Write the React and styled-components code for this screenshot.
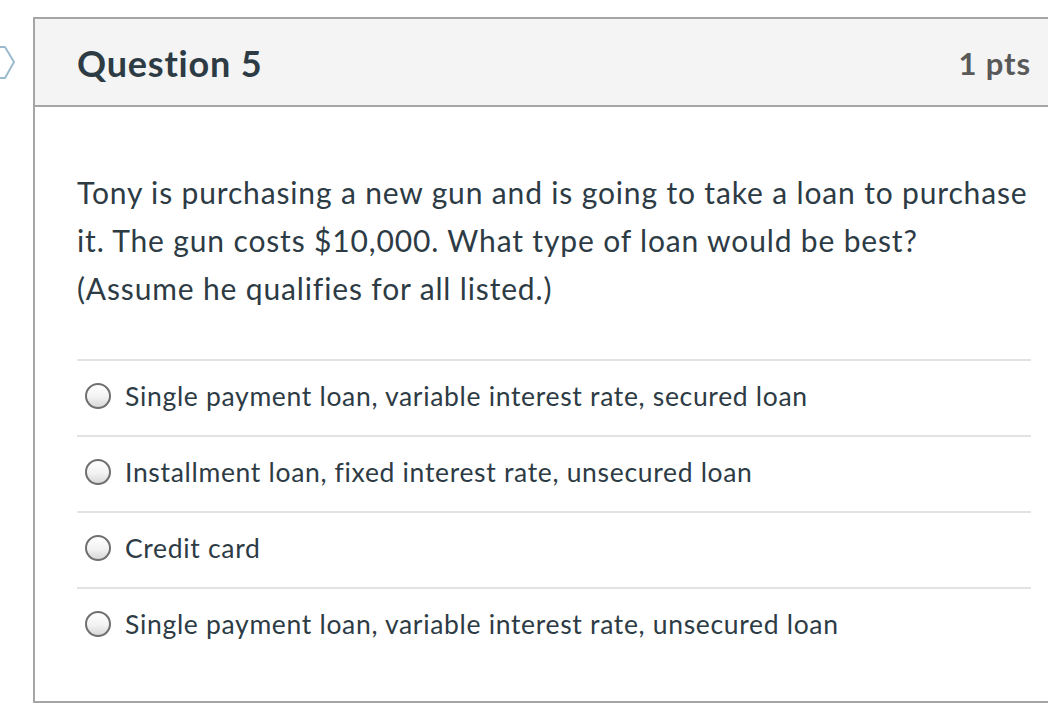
import React from "react";
import styled, { createGlobalStyle } from "styled-components";

const Global = createGlobalStyle`
  html, body { margin: 0; padding: 0; background: #ffffff; }
  body { font-family: Lato, "Open Sans", sans-serif; overflow: hidden; }
`;

const Page = styled.div`
  position: relative;
  width: 1048px;
  height: 710px;
  padding: 17px 0 0 33px;
  box-sizing: border-box;
  overflow: hidden;
`;

const NavArrow = styled.svg`
  position: absolute;
  left: 0;
  top: 45px;
`;

const Card = styled.div`
  width: 1040px;
  flex: none;
  height: 686px;
  box-sizing: border-box;
  border: 2px solid #a5a5a5;
  display: flex;
  flex-direction: column;
`;

const Header = styled.div`
  height: 88px;
  box-sizing: border-box;
  background: #f4f4f4;
  border-bottom: 2px solid #a5a5a5;
  display: flex;
  align-items: center;
  justify-content: space-between;
  padding: 2px 40px 0 42px;
`;

const Title = styled.h2`
  margin: 0;
  font-family: Lato, sans-serif;
  font-weight: 700;
  font-size: 36px;
  letter-spacing: 0.8px;
  color: #2d3b45;
`;

const Points = styled.div`
  font-family: Lato, sans-serif;
  font-weight: 700;
  font-size: 31px;
  letter-spacing: 0.9px;
  color: #595959;
`;

const Body = styled.div`
  padding: 61px 40px 0 42px;
`;

const QuestionText = styled.p`
  margin: 0 0 47px;
  font-size: 30px;
  letter-spacing: 0.85px;
  line-height: 48px;
  color: #2d3b45;
`;

const AnswerList = styled.div`
  display: flex;
  flex-direction: column;
`;

const AnswerRow = styled.label`
  height: 76px;
  box-sizing: border-box;
  border-top: 2px solid #e2e2e2;
  display: flex;
  align-items: center;
  padding: 0 0 4px 8px;
  gap: 14px;
  font-size: 26.5px;
  letter-spacing: 0.68px;
  color: #2d3b45;
`;

const Radio = styled.span`
  width: 26px;
  height: 26px;
  box-sizing: border-box;
  border-radius: 50%;
  border: 2px solid #6f6f6f;
  background: linear-gradient(#ffffff 0%, #f2f2f2 55%, #d8d8d8 100%);
  flex: none;
`;

const answers = [
  "Single payment loan, variable interest rate, secured loan",
  "Installment loan, fixed interest rate, unsecured loan",
  "Credit card",
  "Single payment loan, variable interest rate, unsecured loan",
];

export default function App() {
  return (
    <Page>
      <Global />
      <NavArrow width="18" height="36" viewBox="0 0 18 36">
        <polyline
          points="-4,2 5,2 14,17 5,33 -4,33"
          fill="none"
          stroke="#9bbacd"
          strokeWidth="2"
          strokeLinejoin="round"
        />
      </NavArrow>
      <Card>
        <Header>
          <Title>Question 5</Title>
          <Points>1 pts</Points>
        </Header>
        <Body>
          <QuestionText>
            Tony is purchasing a new gun and is going to take a loan to purchase it. The gun costs $10,000. What type of loan would be best? (Assume he qualifies for all listed.)
          </QuestionText>
          <AnswerList>
            {answers.map((a) => (
              <AnswerRow key={a}>
                <Radio />
                {a}
              </AnswerRow>
            ))}
          </AnswerList>
        </Body>
      </Card>
    </Page>
  );
}
